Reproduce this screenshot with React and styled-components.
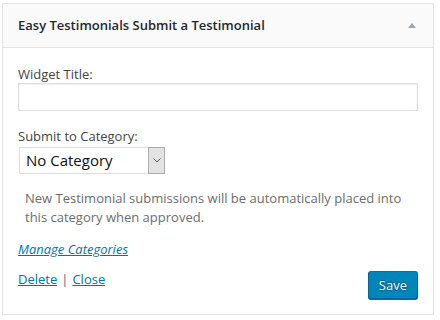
import React from 'react'
import styled, { createGlobalStyle } from 'styled-components'

const GlobalStyle = createGlobalStyle`
  body {
    margin: 0;
    background: #fff;
    font-family: "Open Sans", "Liberation Sans", sans-serif;
    font-size: 13px;
    color: #444;
  }
`

const Page = styled.div`
  padding: 3px 0 0 2px;
`

const Widget = styled.div`
  box-sizing: border-box;
  width: 432px;
  border: 1px solid #e5e5e5;
  box-shadow: 0 1px 1px rgba(0, 0, 0, 0.04);
  background: #fff;
`

const WidgetTop = styled.div`
  display: flex;
  align-items: center;
  justify-content: space-between;
  background: #fafafa;
  border-bottom: 1px solid #e5e5e5;
  padding: 15px 17px 15px 15px;
`

const Title = styled.h3`
  margin: 0;
  font-size: 13px;
  line-height: 1;
  font-weight: 600;
  color: #23282d;
`

const Arrow = styled.span`
  width: 0;
  height: 0;
  border-left: 4px solid transparent;
  border-right: 4px solid transparent;
  border-bottom: 5px solid #a0a5aa;
`

const Inside = styled.div`
  padding: 17px 15px 15px;
`

const Field = styled.div`
  margin-bottom: ${(p) => p.$gap || 0}px;
`

const Label = styled.label`
  display: block;
  line-height: 18px;
  color: #444;
`

const TextInput = styled.input`
  display: block;
  box-sizing: border-box;
  width: 100%;
  height: 28px;
  margin: 0;
  border: 1px solid #ddd;
  box-shadow: inset 0 1px 2px rgba(0, 0, 0, 0.07);
  background: #fff;
  outline: none;
`

const Select = styled.div`
  display: inline-flex;
  box-sizing: border-box;
  margin: 2px 0 0 1px;
  width: 146px;
  height: 27px;
  border: 1px solid #ddd;
  border-right: none;
  background: #fff;
`

const SelectValue = styled.span`
  flex: 1;
  padding-left: 6px;
  font-size: 15px;
  line-height: 25px;
  color: #111;
`

const SelectButton = styled.span`
  display: flex;
  align-items: center;
  justify-content: center;
  box-sizing: border-box;
  width: 17px;
  margin: -1px 0;
  border: 1px solid #ababab;
  background: #e3e3e3;
`

const Description = styled.p`
  margin: 15px 0 13px 7px;
  line-height: 19px;
  color: #6d6d6d;
`

const Link = styled.a`
  color: #0073aa;
  text-decoration: underline;
  font-style: ${(p) => (p.$italic ? 'italic' : 'normal')};
  cursor: pointer;
`

const ManageLine = styled.div`
  line-height: 18px;
`

const Actions = styled.div`
  display: flex;
  justify-content: space-between;
  align-items: flex-start;
  margin-top: 12px;
`

const ActionLinks = styled.div`
  line-height: 18px;
`

const Sep = styled.span`
  color: #50697e;
  margin: 0 4px;
`

const SaveButton = styled.button`
  box-sizing: border-box;
  margin-top: 1px;
  height: 28px;
  padding: 0 10px 1px;
  border: 1px solid;
  border-color: #0073aa #006799 #006799;
  border-radius: 3px;
  background: #0085ba;
  box-shadow: 0 1px 0 #006799;
  color: #fff;
  font-family: inherit;
  font-size: 13px;
  line-height: 26px;
  text-shadow: 0 -1px 1px #006799, 1px 0 1px #006799, 0 1px 1px #006799,
    -1px 0 1px #006799;
  cursor: pointer;
`

export default function App() {
  return (
    <Page>
      <GlobalStyle />
      <Widget>
        <WidgetTop>
          <Title>Easy Testimonials Submit a Testimonial</Title>
          <Arrow />
        </WidgetTop>
        <Inside>
          <Field $gap={16}>
            <Label>Widget Title:</Label>
            <TextInput type="text" />
          </Field>
          <Field>
            <Label>Submit to Category:</Label>
            <Select>
              <SelectValue>No Category</SelectValue>
              <SelectButton>
                <svg width="8" height="5" viewBox="0 0 8 5">
                  <path d="M0.5 0.5 L4 4 L7.5 0.5" fill="none" stroke="#555" strokeWidth="1" />
                </svg>
              </SelectButton>
            </Select>
          </Field>
          <Description>
            New Testimonial submissions will be automatically placed into this category when approved.
          </Description>
          <ManageLine>
            <Link $italic>Manage Categories</Link>
          </ManageLine>
          <Actions>
            <ActionLinks>
              <Link>Delete</Link>
              <Sep>|</Sep>
              <Link>Close</Link>
            </ActionLinks>
            <SaveButton>Save</SaveButton>
          </Actions>
        </Inside>
      </Widget>
    </Page>
  )
}
